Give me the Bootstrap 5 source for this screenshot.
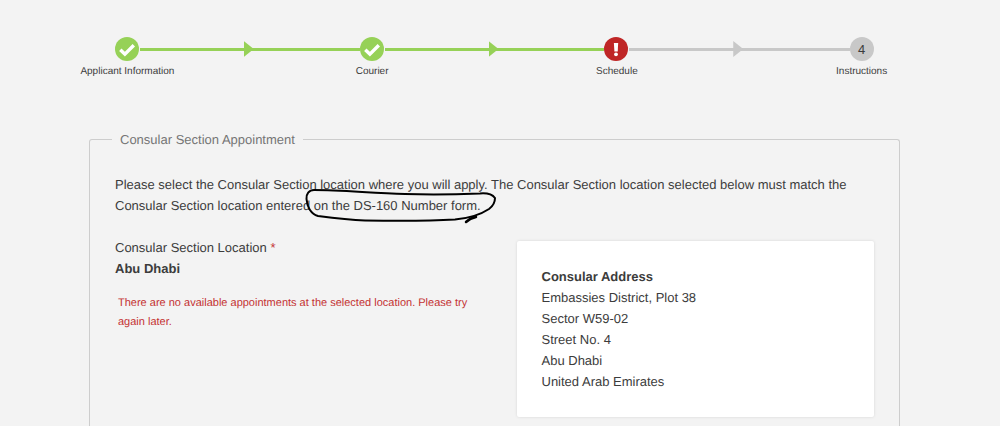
<!DOCTYPE html>
<html lang="en">
<head>
<meta charset="utf-8">
<meta name="viewport" content="width=device-width, initial-scale=1">
<title>Schedule - Consular Section Appointment</title>
<link href="https://cdn.jsdelivr.net/npm/bootstrap@5.3.0/dist/css/bootstrap.min.css" rel="stylesheet">
<style>
  body { background: #f3f3f3; color: #3c3c3c; font-family: "Liberation Sans", Arial, sans-serif; font-size: 13px; line-height: 21px; padding-right: 11px; text-rendering: geometricPrecision; }
  .steps { padding: 37px 5px 0; --step: #96d157; }
  .step-label { font-size: 10px; line-height: 22px; }
  .bar { flex: 1 1 0; height: 3px; background: var(--step); }
  .bar.after { margin-left: 1px; }
  .arrow { width: 10px; height: 16px; background: var(--step); clip-path: polygon(0 0, 100% 50%, 0 100%); margin: 0 -4px 0 -6px; z-index: 1; }
  .marker { width: 24px; height: 24px; background: var(--step); }
  .pending { --step: #c8c8c8; }
  .marker.current { background: #bf2626; }
  .panel { margin: 46px 89px 0; border: 1px solid #cdcdcd; border-bottom: 0; border-radius: 3px 3px 0 0; padding: 0 25px 9px; }
  .panel legend { font-size: 13px; line-height: 21px; color: #757575; padding: 0 8px; margin: 0 0 24px -3px; }
  .location { --bs-gutter-x: 44px; margin-top: 21px; }
  .error-text { color: #c43232; font-size: 11px; line-height: 19px; padding-left: 3px; margin-top: 15px; }
  .required { color: #c43232; }
  .address { padding: 25px; border-radius: 2px; box-shadow: 0 0 3px rgba(0,0,0,.12); }
  .ink { left: -9px; top: -11px; width: 192px; height: 38px; pointer-events: none; }
</style>
</head>
<body class="min-vh-100 d-flex flex-column">
<ol class="steps list-unstyled row g-0 mb-0 text-center">
  <li class="col">
    <div class="d-flex align-items-center">
      <span class="bar invisible"></span>
      <span class="marker rounded-circle"><svg class="d-block" width="24" height="24" viewBox="0 0 24 24" role="img" aria-label="Completed"><path d="M5.3 12.7l4.6 4.500 8.900-9" fill="none" stroke="#fff" stroke-width="3.400"/></svg></span>
      <span class="bar after"></span><span class="arrow"></span>
    </div>
    <div class="step-label">Applicant Information</div>
  </li>
  <li class="col">
    <div class="d-flex align-items-center">
      <span class="bar"></span>
      <span class="marker rounded-circle"><svg class="d-block" width="24" height="24" viewBox="0 0 24 24" role="img" aria-label="Completed"><path d="M5.3 12.7l4.6 4.500 8.900-9" fill="none" stroke="#fff" stroke-width="3.400"/></svg></span>
      <span class="bar after"></span><span class="arrow"></span>
    </div>
    <div class="step-label">Courier</div>
  </li>
  <li class="col">
    <div class="d-flex align-items-center">
      <span class="bar"></span>
      <span class="marker current rounded-circle"><svg class="d-block" width="24" height="24" viewBox="0 0 24 24" role="img" aria-label="Needs attention"><path d="M9.9 6h4.3l-.5 8.400h-3.300z" fill="#fff"/><circle cx="12" cy="17.300" r="1.900" fill="#fff"/></svg></span>
      <span class="bar after pending"></span><span class="arrow pending"></span>
    </div>
    <div class="step-label">Schedule</div>
  </li>
  <li class="col pending">
    <div class="d-flex align-items-center">
      <span class="bar"></span>
      <span class="marker rounded-circle d-flex align-items-center justify-content-center">4</span>
      <span class="bar invisible"></span>
    </div>
    <div class="step-label">Instructions</div>
  </li>
</ol>

<fieldset class="panel flex-grow-1">
  <legend class="float-none w-auto">Consular Section Appointment</legend>
  <p class="mb-0">Please select the Consular Section location where you will apply. The Consular Section location selected below must match the Consular Section location entered <span class="position-relative">on the DS-160 Number form.<svg class="ink position-absolute" viewBox="0 0 192 38" fill="none" stroke="#000" stroke-width="2" stroke-linecap="round" stroke-linejoin="round" aria-hidden="true"><path d="M9 3C4 3 1 7 1.500 12C2 20 6 27 13 29C28 31 44 33 60 33.500C90 34 125 34 150 32.500C166 31 175 28 184 22C188 19 190 15 190 11C187 7 181 6 175 6.500C150 7.500 128 8 100 7C66 6 36 3 9 3"/><path d="M161 35Q165 31 171 30" stroke-width="2.500"/></svg></span></p>
  <div class="row location">
    <div class="col-6">
      <div>Consular Section Location <span class="required">*</span></div>
      <div class="fw-bold">Abu Dhabi</div>
      <p class="error-text mb-0" role="alert">There are no available appointments at the selected location. Please try again later.</p>
    </div>
    <div class="col-6">
      <address class="address bg-white mt-1 mb-0"><strong>Consular Address</strong><br>Embassies District, Plot 38<br>Sector W59-02<br>Street No. 4<br>Abu Dhabi<br>United Arab Emirates</address>
    </div>
  </div>
</fieldset>
<script src="https://cdn.jsdelivr.net/npm/bootstrap@5.3.0/dist/js/bootstrap.bundle.min.js"></script>
</body>
</html>
